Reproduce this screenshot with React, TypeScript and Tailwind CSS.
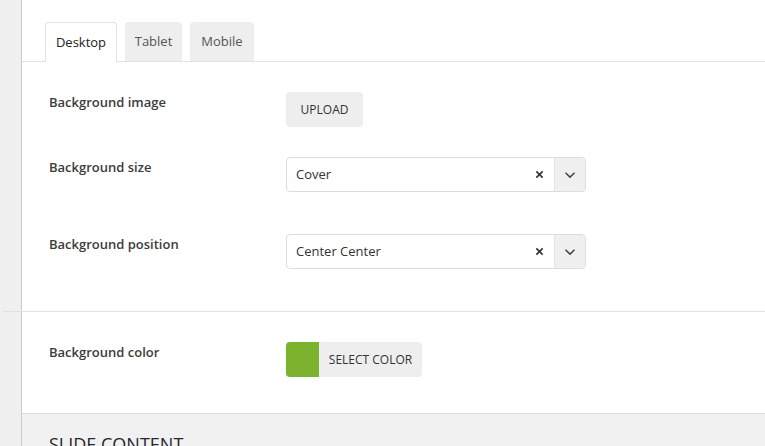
import React from "react";

const font = { fontFamily: '"Open Sans", "Noto Sans", sans-serif' };

const Select: React.FC<{ value: string }> = ({ value }) => (
  <div className="flex h-[35px] w-[300px] overflow-hidden rounded border border-[#dddddd] bg-white">
    <div className="flex flex-1 items-center pl-[9px] pt-px text-[13px] text-[#333]">{value}</div>
    <div className="flex w-[30px] items-center justify-center border-r border-[#e4e4e4] text-[#333]">
      <svg width="9" height="9" viewBox="0 0 10 10">
        <path d="M1.5 1.5l7 7M8.5 1.5l-7 7" stroke="#333" strokeWidth="1.8" />
      </svg>
    </div>
    <div className="flex w-[30px] items-center justify-center bg-[#f0f0f0]">
      <svg width="12" height="8" viewBox="0 0 12 8">
        <path d="M1.5 1.8l4.5 4.3 4.5-4.3" fill="none" stroke="#444" strokeWidth="1.5" />
      </svg>
    </div>
  </div>
);

const Row: React.FC<{ label: string; className?: string; children: React.ReactNode }> = ({
  label,
  className,
  children,
}) => (
  <div className={`flex items-start pl-[27px] ${className ?? ""}`}>
    <div className="w-[237px] text-[13px] font-semibold leading-[20px] text-[#3c3c3c]">{label}</div>
    {children}
  </div>
);

const App: React.FC = () => {
  return (
    <div className="flex h-[446px] w-full overflow-hidden bg-[#f0f0f0]" style={font}>
      {/* left admin strip */}
      <div className="w-[22px] shrink-0 border-r border-[#cccccc] bg-[#f0f0f0]" />

      <div className="flex flex-1 flex-col">
        <div className="bg-white">
          {/* tabs */}
          <div className="flex gap-2 border-b border-[#e2e2e2] pl-[23px] pt-[22px]">
            <div className="-mb-px flex h-[40px] w-[72px] items-center justify-center rounded-t border border-b-0 border-[#e2e2e2] bg-white text-[13px] text-[#222]">
              Desktop
            </div>
            <div className="flex h-[39px] w-[57px] items-center justify-center rounded-t bg-[#eeeeee] text-[13px] text-[#555]">
              Tablet
            </div>
            <div className="flex h-[39px] w-[64px] items-center justify-center rounded-t bg-[#eeeeee] text-[13px] text-[#555]">
              Mobile
            </div>
          </div>

          <Row label="Background image" className="mt-[30px]">
            <button className="flex h-[35px] w-[77px] items-center justify-center rounded bg-[#eeeeee] text-[12px] text-[#333]">
              UPLOAD
            </button>
          </Row>

          <Row label="Background size" className="mt-[30px]">
            <Select value="Cover" />
          </Row>

          <Row label="Background position" className="mt-[42px] pb-[42px]">
            <Select value="Center Center" />
          </Row>
        </div>

        <div className="-ml-[20px] border-t border-[#e2e2e2] pl-[20px]">
          <div className="bg-white pb-[36px]">
            <Row label="Background color" className="pt-[30px]">
              <button className="flex h-[35px] w-[136px] overflow-hidden rounded bg-[#eeeeee]">
                <span className="h-full w-[33px] bg-[#7cb32e]" />
                <span className="flex flex-1 items-center justify-center text-[12px] text-[#333]">
                  SELECT COLOR
                </span>
              </button>
            </Row>
          </div>
        </div>

        {/* next section */}
        <div className="flex-1 border-t border-[#dedede] bg-[#f1f1f1] pl-[27px] pt-[18px]">
          <h2 className="text-[18px] leading-[24px] text-[#23282d]">SLIDE CONTENT</h2>
        </div>
      </div>
    </div>
  );
};

export default App;
